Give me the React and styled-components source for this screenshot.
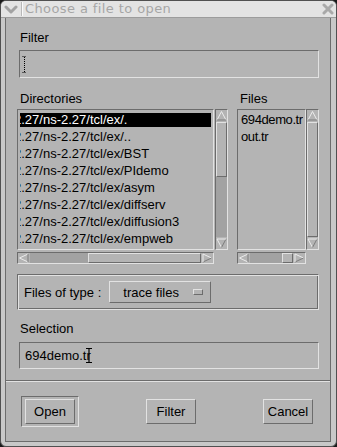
import React from 'react';
import styled, { createGlobalStyle } from 'styled-components';

const BG = '#b4b4b4';
const LIGHT = '#e2e2e2';
const DARK = '#6c6c6c';
const TROUGH = '#a2a2a2';
const STRIP = '#c8c8c8';

const Global = createGlobalStyle`
  html, body { margin: 0; padding: 0; background: #1a1a1a; width: 337px; height: 447px; overflow: hidden; }
  body { font-family: "Liberation Sans", Arial, Helvetica, sans-serif; }
`;

const Window = styled.div`
  width: 337px;
  height: 447px;
  box-sizing: border-box;
  display: flex;
  flex-direction: column;
  background: ${STRIP};
  border: 1px solid #505050;
  border-radius: 6px;
  overflow: hidden;
`;

const TitleBar = styled.div`
  flex: none;
  height: 16px;
  display: flex;
  align-items: center;
  background: #e3e3e3;
  border-bottom: 1px solid #9c9c9c;
`;

const MenuGlyph = styled.div`
  width: 20px;
  height: 16px;
  display: flex;
  align-items: center;
  justify-content: center;
`;

const TitleSep = styled.div`
  width: 1px;
  height: 14px;
  background: #b8b8b8;
  border-right: 1px solid #fafafa;
`;

const TitleText = styled.div`
  flex: 1;
  padding-left: 2px;
  font-family: "DejaVu Sans", "Liberation Sans", sans-serif;
  font-size: 13px;
  letter-spacing: 0.4px;
  line-height: 16px;
  color: #a6a6a6;
  white-space: nowrap;
`;

const CloseGlyph = styled.div`
  width: 13px;
  height: 16px;
  margin-right: 2px;
  display: flex;
  align-items: center;
  justify-content: center;
`;

const Frame = styled.div`
  flex: 1;
  display: flex;
  padding: 0 5px 4px 4px;
  min-height: 0;
`;

const Body = styled.div`
  flex: 1;
  display: flex;
  flex-direction: column;
  background: ${BG};
  border-left: 1px solid ${DARK};
  border-right: 1px solid ${DARK};
  border-bottom: 1px solid ${DARK};
  min-height: 0;
`;

const TopPane = styled.div`
  flex: 1;
  display: flex;
  flex-direction: column;
  padding: 12px 11px 0 11px;
  border-bottom: 1px solid ${DARK};
`;

const Label = styled.div`
  height: 15px;
  line-height: 15px;
  font-size: 13px;
  color: #000;
  padding-left: 3px;
  margin-top: ${p => p.$mt || 0}px;
  white-space: nowrap;
`;

const Entry = styled.div`
  box-sizing: border-box;
  height: ${p => p.$h}px;
  margin: ${p => p.$mt}px 0 0 2px;
  border: 1px solid;
  border-color: ${DARK} ${LIGHT} ${LIGHT} ${DARK};
  display: flex;
  align-items: center;
  padding-left: ${p => p.$pl}px;
  font-size: 13px;
  color: #000;
  white-space: nowrap;
`;

const Cursor = styled.svg`
  flex: none;
  margin-left: ${p => p.$ml || 0}px;
`;

const ListsRow = styled.div`
  display: flex;
  gap: 9px;
`;

const Column = styled.div`
  width: ${p => p.$w}px;
  display: flex;
  flex-direction: column;
`;

const ListArea = styled.div`
  display: flex;
  gap: ${p => p.$gap}px;
  margin-top: 3px;
  height: 141px;
`;

const ListBox = styled.div`
  box-sizing: border-box;
  width: ${p => p.$w}px;
  height: 141px;
  border: 1px solid;
  border-color: ${DARK} ${LIGHT} ${LIGHT} ${DARK};
  padding: 3px 2px 0;
  overflow: hidden;
`;

const Item = styled.div`
  height: 14px;
  line-height: 14px;
  font-size: 13px;
  letter-spacing: ${p => p.$ls || 0}px;
  margin-bottom: 3px;
  white-space: nowrap;
  overflow: hidden;
  padding-left: ${p => p.$pl || 0}px;
  text-indent: ${p => p.$indent || 0}px;
  background: ${p => (p.$sel ? '#000' : 'transparent')};
  color: ${p => (p.$sel ? '#fff' : '#000')};
`;

const VBar = styled.div`
  box-sizing: border-box;
  width: 13px;
  height: 141px;
  border: 1px solid;
  border-color: ${DARK} ${LIGHT} ${LIGHT} ${DARK};
  background: ${TROUGH};
  display: flex;
  flex-direction: column;
`;

const HBar = styled.div`
  box-sizing: border-box;
  width: ${p => p.$w}px;
  height: 12px;
  margin-top: 2px;
  border: 1px solid;
  border-color: ${DARK} ${LIGHT} ${LIGHT} ${DARK};
  background: ${TROUGH};
  display: flex;
`;

const ArrowBox = styled.div`
  flex: none;
  width: ${p => (p.$h ? 12 : 11)}px;
  height: ${p => (p.$h ? 10 : 12)}px;
  background: ${BG};
  display: flex;
  align-items: center;
  justify-content: center;
`;

const Trough = styled.div`
  flex: 1;
  display: flex;
  flex-direction: ${p => (p.$h ? 'row' : 'column')};
  min-width: 0;
  min-height: 0;
`;

const Gap = styled.div`
  flex: ${p => p.$g} 1 0;
`;

const Thumb = styled.div`
  flex: ${p => p.$g} 1 0;
  box-sizing: border-box;
  background: ${BG};
  border: 1px solid;
  border-color: ${LIGHT} ${DARK} ${DARK} ${LIGHT};
`;

const TypeFrame = styled.div`
  box-sizing: border-box;
  height: 36px;
  margin-top: 10px;
  display: flex;
  align-items: center;
  padding-left: 6px;
  border: 1px solid;
  border-color: ${DARK} ${LIGHT} ${LIGHT} ${DARK};
  box-shadow: inset 1px 1px 0 ${LIGHT}, inset -1px -1px 0 ${DARK};
  font-size: 13px;
`;

const OptionButton = styled.div`
  box-sizing: border-box;
  width: 102px;
  height: 22px;
  margin-left: 8px;
  display: flex;
  align-items: center;
  padding-left: 13px;
  padding-right: 7px;
  border: 1px solid;
  border-color: ${LIGHT} ${DARK} ${DARK} ${LIGHT};
  font-size: 13px;
`;

const Indicator = styled.div`
  margin-left: auto;
  box-sizing: border-box;
  width: 10px;
  height: 6px;
  border: 1px solid;
  border-color: ${LIGHT} ${DARK} ${DARK} ${LIGHT};
`;

const ButtonPane = styled.div`
  flex: none;
  box-sizing: border-box;
  height: 60px;
  border-top: 1px solid ${LIGHT};
  display: flex;
  align-items: center;
  justify-content: space-between;
  padding: 0 17px 0 15px;
`;

const DefaultRing = styled.div`
  padding: 2px 3px;
  border: 1px solid;
  border-color: ${DARK} ${LIGHT} ${LIGHT} ${DARK};
`;

const Button = styled.div`
  box-sizing: border-box;
  width: 50px;
  height: 25px;
  display: flex;
  align-items: center;
  justify-content: center;
  border: 1px solid;
  border-color: ${LIGHT} ${DARK} ${DARK} ${LIGHT};
  font-size: 13px;
  color: #000;
`;

const Arrow = ({ dir }) => {
  const pts = {
    up: [[5.5, 1.5], [1, 10], [10, 10]],
    down: [[5.5, 10.5], [1, 2], [10, 2]],
    left: [[1.5, 5], [10, 1], [10, 9]],
    right: [[10.5, 5], [2, 1], [2, 9]],
  }[dir];
  const h = dir === 'left' || dir === 'right';
  const [a, b, c] = pts;
  return (
    <svg width={h ? 12 : 11} height={h ? 10 : 12} viewBox={h ? '0 0 12 10' : '0 0 11 12'}>
      <line x1={a[0]} y1={a[1]} x2={b[0]} y2={b[1]} stroke="#ececec" strokeWidth="1" />
      <line x1={a[0]} y1={a[1]} x2={c[0]} y2={c[1]} stroke={dir === 'up' || dir === 'left' ? '#ececec' : '#7c7c7c'} strokeWidth="1" />
      <line x1={b[0]} y1={b[1]} x2={c[0]} y2={c[1]} stroke={dir === 'down' || dir === 'right' ? '#ececec' : '#7c7c7c'} strokeWidth="1" />
    </svg>
  );
};

const VScroll = ({ start, size }) => (
  <VBar>
    <ArrowBox><Arrow dir="up" /></ArrowBox>
    <Trough>
      {start > 0 && <Gap $g={start} />}
      <Thumb $g={size} />
      {1 - start - size > 0.001 && <Gap $g={1 - start - size} />}
    </Trough>
    <ArrowBox><Arrow dir="down" /></ArrowBox>
  </VBar>
);

const HScroll = ({ w, start, size }) => (
  <HBar $w={w}>
    <ArrowBox $h><Arrow dir="left" /></ArrowBox>
    <Trough $h>
      {start > 0 && <Gap $g={start} />}
      <Thumb $g={size} />
      {1 - start - size > 0.001 && <Gap $g={1 - start - size} />}
    </Trough>
    <ArrowBox $h><Arrow dir="right" /></ArrowBox>
  </HBar>
);

const dirs = [
  '2.27/ns-2.27/tcl/ex/.',
  '2.27/ns-2.27/tcl/ex/..',
  '2.27/ns-2.27/tcl/ex/BST',
  '2.27/ns-2.27/tcl/ex/PIdemo',
  '2.27/ns-2.27/tcl/ex/asym',
  '2.27/ns-2.27/tcl/ex/diffserv',
  '2.27/ns-2.27/tcl/ex/diffusion3',
  '2.27/ns-2.27/tcl/ex/empweb',
];

const files = ['694demo.tr', 'out.tr'];

export default function App() {
  return (
    <>
      <Global />
      <Window>
        <TitleBar>
          <MenuGlyph>
            <svg width="14" height="9" viewBox="0 0 14 9">
              <polyline points="2,2 7,7 12,2" fill="none" stroke="#a2a2a2" strokeWidth="3" strokeLinecap="round" strokeLinejoin="round" />
            </svg>
          </MenuGlyph>
          <TitleSep />
          <TitleText>Choose a file to open</TitleText>
          <CloseGlyph>
            <svg width="12" height="12" viewBox="0 0 12 12">
              <path d="M2 2 L10 10 M10 2 L2 10" stroke="#a9a9a9" strokeWidth="3" strokeLinecap="round" />
            </svg>
          </CloseGlyph>
        </TitleBar>
        <Frame>
          <Body>
            <TopPane>
              <Label>Filter</Label>
              <Entry $h={28} $mt={5} $pl={2}>
                <Cursor width="5" height="17" viewBox="0 0 5 17">
                  <path d="M0.5 0.5 H4.5 M0.5 16.5 H4.5" stroke="#000" strokeWidth="1" strokeDasharray="1 1" />
                  <line x1="2.5" y1="1" x2="2.5" y2="16" stroke="#000" strokeWidth="1" strokeDasharray="1 1" />
                </Cursor>
              </Entry>
              <ListsRow>
                <Column $w={211}>
                  <Label $mt={13}>Directories</Label>
                  <ListArea $gap={1}>
                    <ListBox $w={197}>
                      {dirs.map((d, i) => (
                        <Item key={d} $sel={i === 0} $indent={-6}>{d}</Item>
                      ))}
                    </ListBox>
                    <VScroll start={0} size={0.47} />
                  </ListArea>
                  <HScroll w={197} start={0.345} size={0.655} />
                </Column>
                <Column $w={82}>
                  <Label $mt={13}>Files</Label>
                  <ListArea $gap={0}>
                    <ListBox $w={69}>
                      {files.map(f => (
                        <Item key={f} $pl={1} $ls={-0.4}>{f}</Item>
                      ))}
                    </ListBox>
                    <VScroll start={0} size={1} />
                  </ListArea>
                  <HScroll w={69} start={0.77} size={0.23} />
                </Column>
              </ListsRow>
              <TypeFrame>
                <span>Files of type :</span>
                <OptionButton>
                  <span>trace files</span>
                  <Indicator />
                </OptionButton>
              </TypeFrame>
              <Label $mt={11}>Selection</Label>
              <Entry $h={27} $mt={6} $pl={5}>
                <span>694demo.tr</span>
                <Cursor $ml={-5} width="6" height="15" viewBox="0 0 6 15">
                  <path d="M0 0.5 H6 M0 14.5 H6 M3 0.5 V14.5" stroke="#000" strokeWidth="1.2" fill="none" />
                </Cursor>
              </Entry>
            </TopPane>
            <ButtonPane>
              <DefaultRing>
                <Button>Open</Button>
              </DefaultRing>
              <Button>Filter</Button>
              <Button>Cancel</Button>
            </ButtonPane>
          </Body>
        </Frame>
      </Window>
    </>
  );
}
